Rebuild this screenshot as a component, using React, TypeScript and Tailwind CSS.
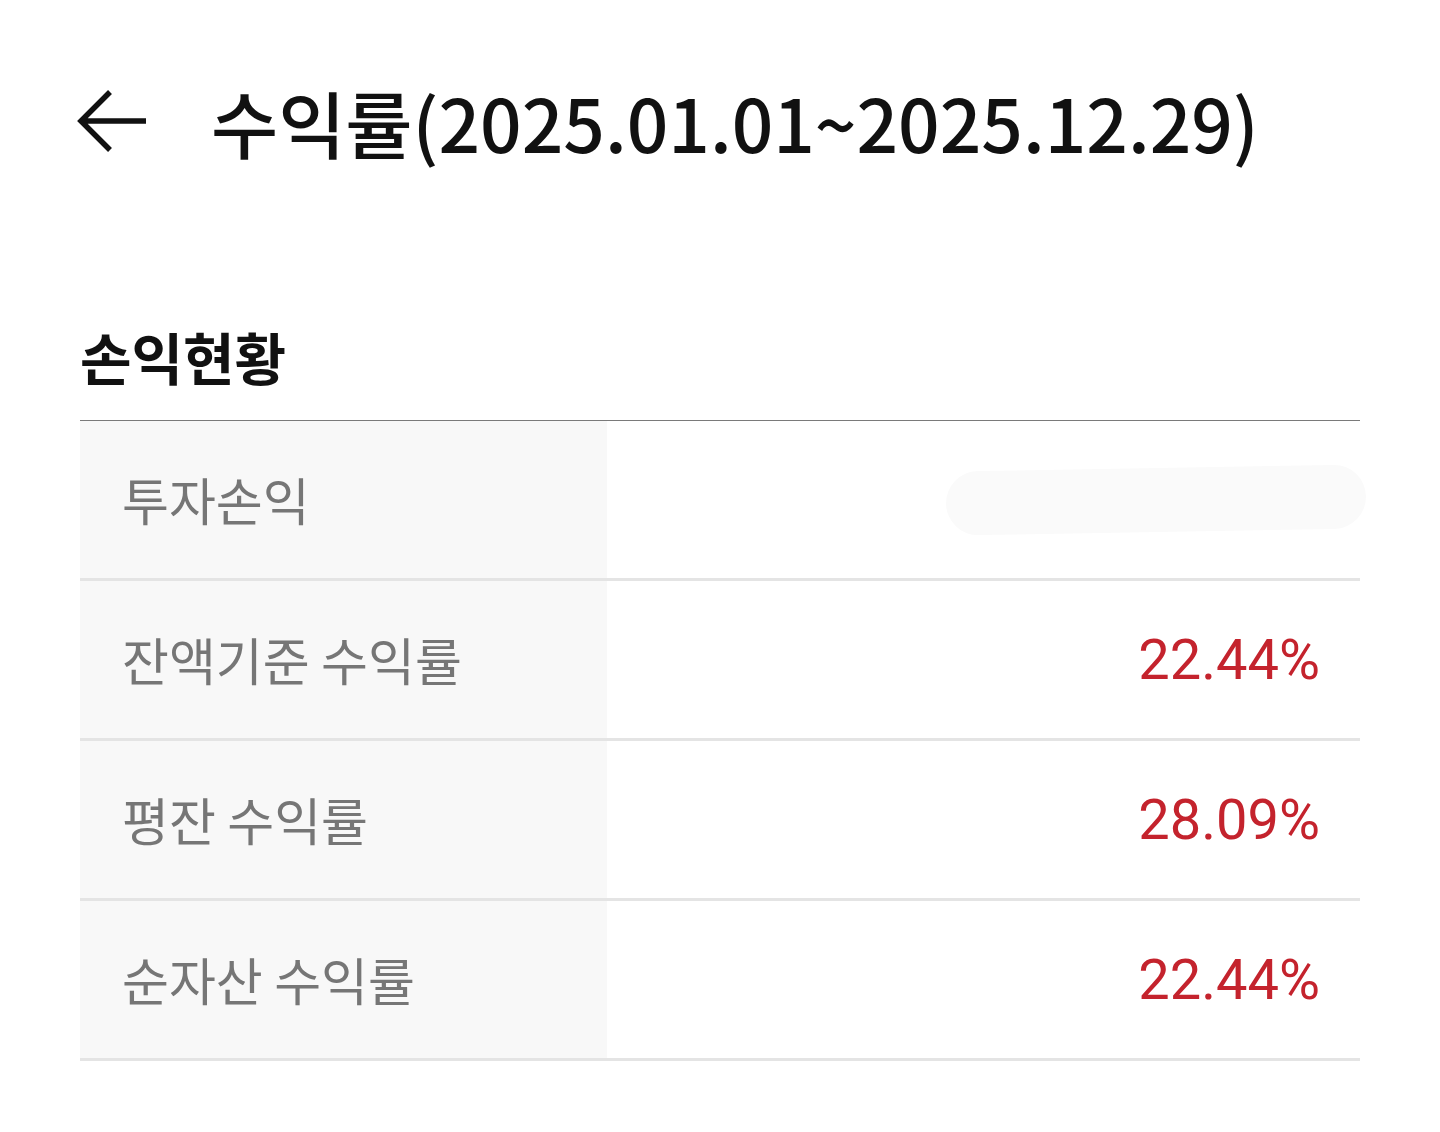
import React from 'react';

type Row = {
  label: string;
  value?: string;
  hidden?: boolean;
};

const rows: Row[] = [
  { label: '투자손익', hidden: true },
  { label: '잔액기준 수익률', value: '22.44%' },
  { label: '평잔 수익률', value: '28.09%' },
  { label: '순자산 수익률', value: '22.44%' },
];

const BackArrow: React.FC = () => (
  <svg width="72" height="66" viewBox="0 0 72 66" fill="none">
    <path d="M69 33H5M33 4L4 33l29 29" stroke="#111" strokeWidth="5.5" strokeLinecap="butt" strokeLinejoin="miter" />
  </svg>
);

const App: React.FC = () => {
  return (
    <div className="min-h-[1132px] w-[1440px] bg-white font-['Noto_Sans_CJK_KR','Noto_Sans',sans-serif]">
      {/* Header */}
      <header className="flex h-[242px] items-center pl-[77px]">
        <button className="flex items-center">
          <BackArrow />
        </button>
        <h1 className="ml-[62px] text-[73px] font-medium leading-none text-[#111]">
          수익률(2025.01.01~2025.12.29)
        </h1>
      </header>

      {/* 손익현황 */}
      <section className="px-[80px] pt-[83px]">
        <h2 className="text-[56px] font-bold leading-[62px] text-[#111]">손익현황</h2>
        <div className="mt-[33px] border-t-[1.5px] border-[#7a7a7a]">
          {rows.map((row) => (
            <div key={row.label} className="flex h-[160px] border-b-[3px] border-[#e4e4e4]">
              <div className="flex w-[527px] items-center bg-[#f8f8f8] pl-[42px]">
                <span className="text-[51px] leading-none text-[#767676]">{row.label}</span>
              </div>
              <div className="flex flex-1 items-center justify-end pr-[40px]">
                {row.hidden ? (
                  <div className="-mr-[46px] h-[64px] w-[420px] -rotate-[1deg] rounded-full bg-[#fafafa]" />
                ) : (
                  <span className="font-['Roboto','Noto_Sans_CJK_KR',sans-serif] text-[56px] leading-none text-[#c4232d]">
                    {row.value}
                  </span>
                )}
              </div>
            </div>
          ))}
        </div>
      </section>
    </div>
  );
};

export default App;
